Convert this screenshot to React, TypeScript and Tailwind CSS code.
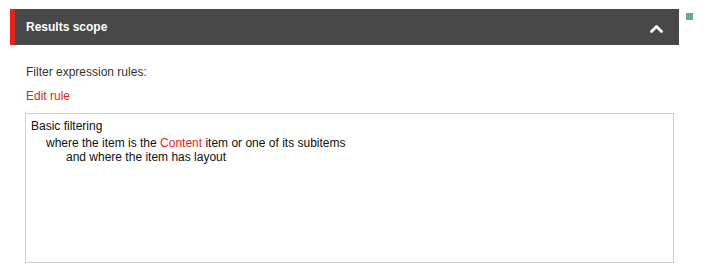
export default function App() {
  return (
    <div className="relative h-[279px] w-[707px] bg-white pl-[10px] pt-[9px] font-['Liberation_Sans',Arial,sans-serif] text-[12px] text-[#222]">
      <div className="flex w-[669px] items-center">
        <div className="flex h-[36px] flex-1 items-center justify-between border-l-[5px] border-[#e3231b] bg-[#484848] pl-[11px] pr-[16px]">
          <span className="text-[12px] font-bold text-white">Results scope</span>
          <svg width="13" height="9" viewBox="0 0 13 9" className="mt-[2px]">
            <path d="M1.5 7.5 L6.5 2.5 L11.5 7.5" fill="none" stroke="white" strokeWidth="2.8" strokeLinecap="round" strokeLinejoin="round" />
          </svg>
        </div>
      </div>
      <div className="absolute left-[686px] top-[13px] h-[7px] w-[7px] bg-[#6aa98f]" />
      <div className="pl-[15px]">
        <p className="mt-[19px] pl-[1px] leading-[16px] text-[#333]">Filter expression rules:</p>
        <p className="mt-[8px] pl-[1px] leading-[16px] text-[#e3231b]">Edit rule</p>
        <div className="mt-[9px] h-[150px] w-[649px] border border-[#cfcfcf] px-[5px] pt-[3px] text-[#111]">
          <p className="leading-[18px]">Basic filtering</p>
          <p className="pl-[15px] leading-[16px]">
            where the item is the <span className="text-[#e3231b]">Content</span> item or one of its subitems
          </p>
          <p className="pl-[35px] leading-[13px]">and where the item has layout</p>
        </div>
      </div>
    </div>
  )
}
